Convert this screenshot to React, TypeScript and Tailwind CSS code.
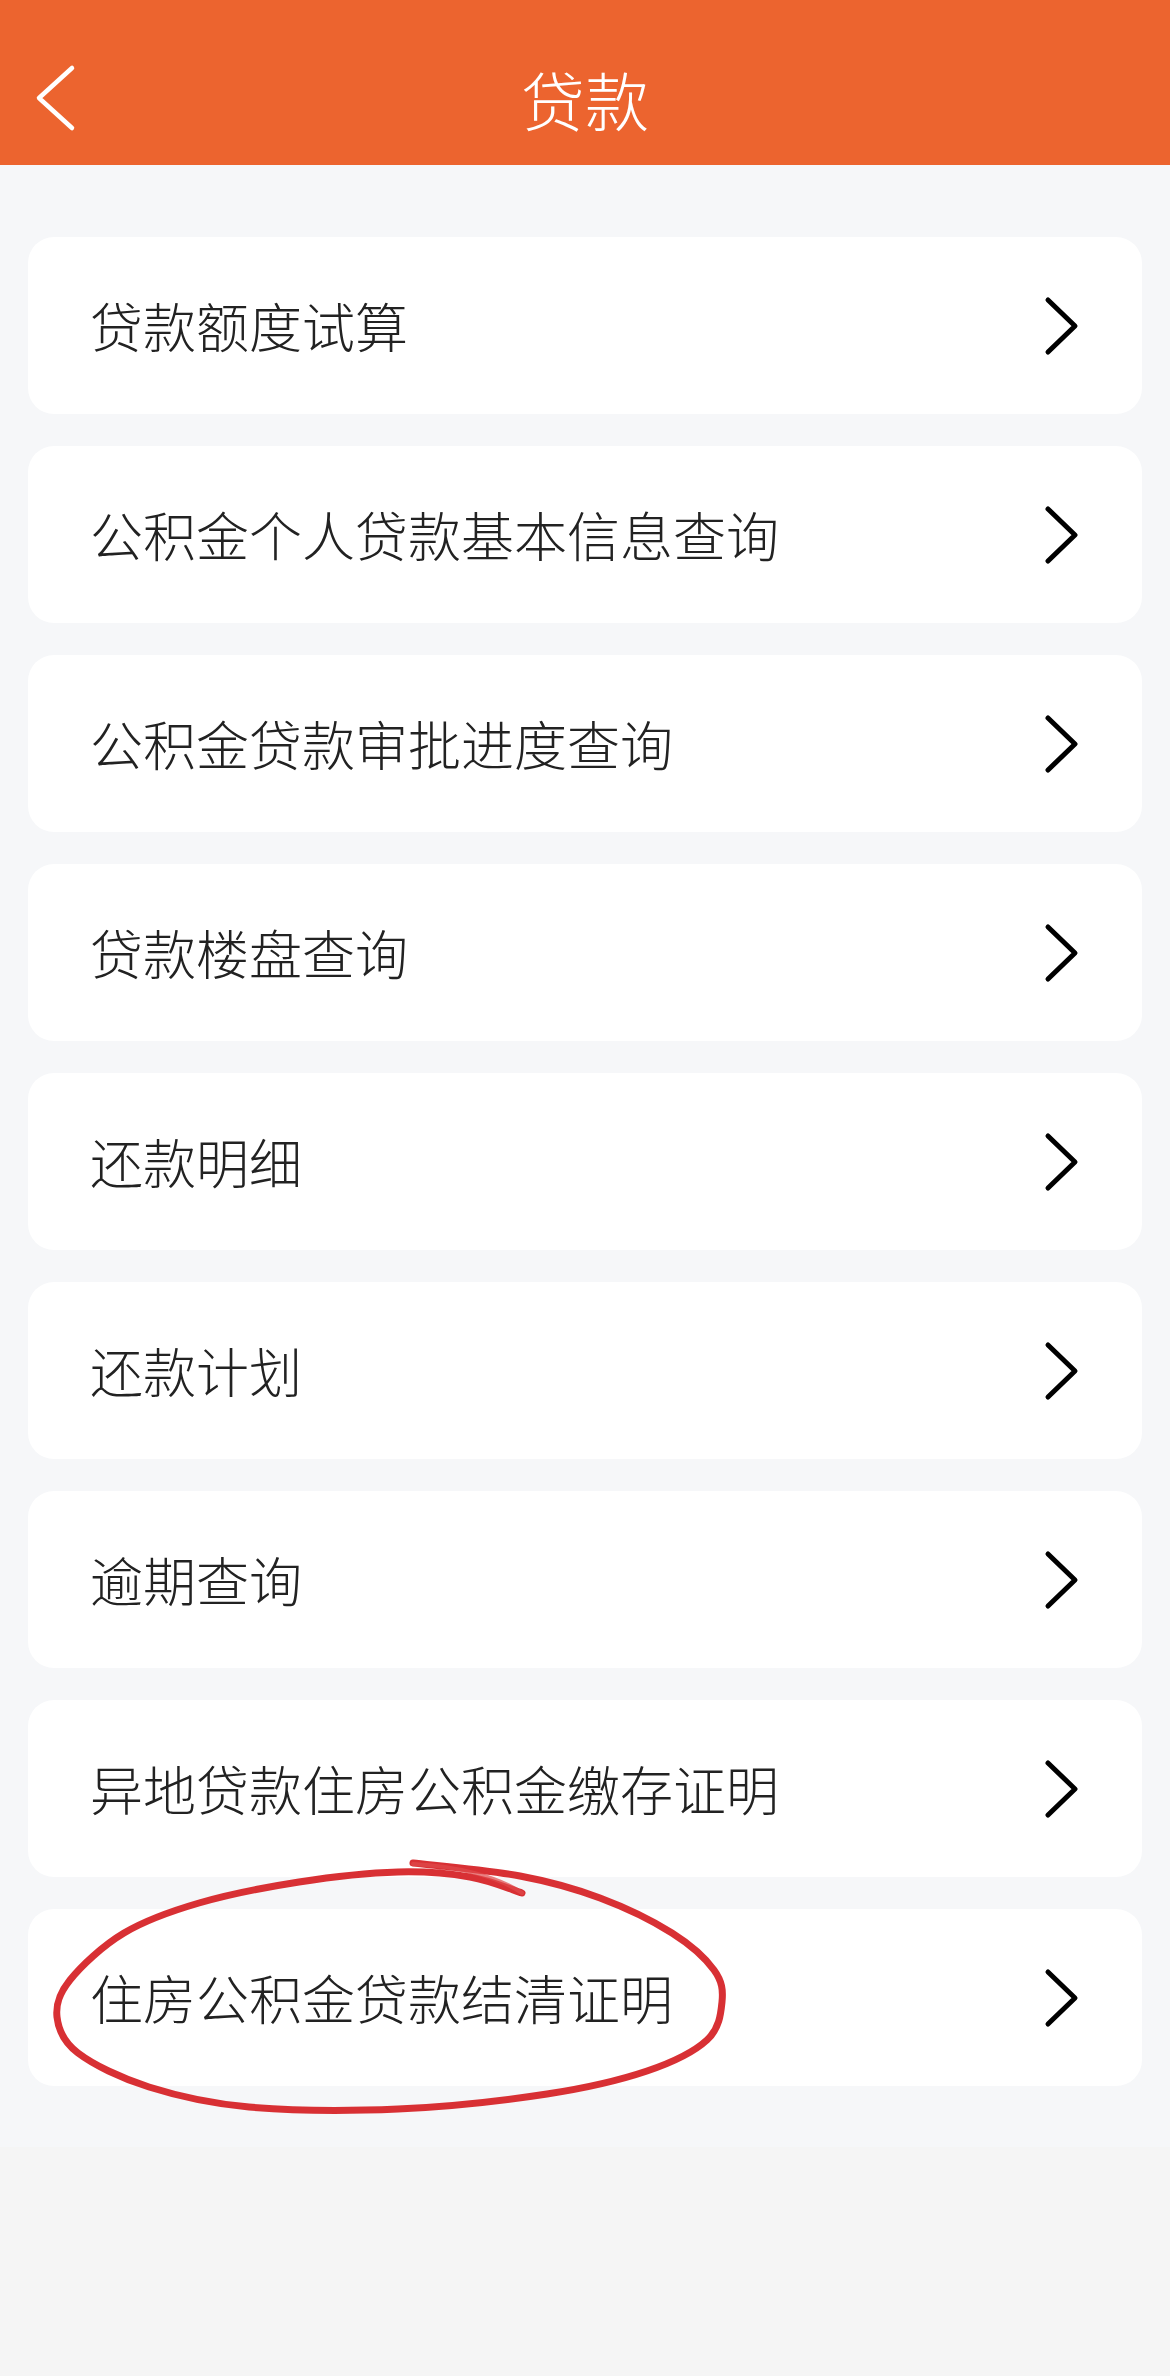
import React from 'react'

const items = [
  '贷款额度试算',
  '公积金个人贷款基本信息查询',
  '公积金贷款审批进度查询',
  '贷款楼盘查询',
  '还款明细',
  '还款计划',
  '逾期查询',
  '异地贷款住房公积金缴存证明',
  '住房公积金贷款结清证明',
]

// hand-drawn red circle around the last row, points in page coords
const loop: [number, number][] = [
  [413, 1863], [520, 1876], [600, 1898], [672, 1933], [714, 1970], [722, 2002],
  [707, 2040], [647, 2071], [547, 2094], [398, 2109], [249, 2107], [149, 2087],
  [78, 2053], [57, 2017], [70, 1980], [124, 1933], [199, 1903], [299, 1882],
  [398, 1872], [470, 1877], [522, 1893],
]

function smooth(pts: [number, number][]) {
  let d = `M${pts[0][0]},${pts[0][1]}`
  for (let i = 0; i < pts.length - 1; i++) {
    const p0 = pts[i - 1] || pts[i]
    const p1 = pts[i]
    const p2 = pts[i + 1]
    const p3 = pts[i + 2] || p2
    const c1x = p1[0] + (p2[0] - p0[0]) / 6
    const c1y = p1[1] + (p2[1] - p0[1]) / 6
    const c2x = p2[0] - (p3[0] - p1[0]) / 6
    const c2y = p2[1] - (p3[1] - p1[1]) / 6
    d += ` C${c1x},${c1y} ${c2x},${c2y} ${p2[0]},${p2[1]}`
  }
  return d
}

function ChevronRight() {
  return (
    <svg width="40" height="64" viewBox="0 0 40 64" className="shrink-0">
      <path d="M6 6 L33 32 L6 58" fill="none" stroke="#000" strokeWidth="5" strokeLinecap="round" strokeLinejoin="round" />
    </svg>
  )
}

export default function App() {
  return (
    <div
      className="relative min-h-[2376px] w-[1170px] bg-[#f5f5f5]"
      style={{ fontFamily: '"Noto Sans CJK SC", "Noto Sans", sans-serif' }}
    >
      <header className="grid h-[165px] grid-cols-[1fr_auto_1fr] items-center bg-[#ec642f] pt-[30px]">
        <div className="pl-[34px]">
          <svg width="48" height="68" viewBox="0 0 48 68">
            <path d="M38 4 L5 34 L38 64" fill="none" stroke="#fff" strokeWidth="4.5" strokeLinecap="round" strokeLinejoin="round" />
          </svg>
        </div>
        <h1 className="text-[64px] font-light leading-none text-white">贷款</h1>
        <div />
      </header>

      <main className="flex flex-col gap-[32px] bg-[#f6f7f9] px-[28px] pb-[61px] pt-[72px]">
        {items.map((label) => (
          <div
            key={label}
            className="flex h-[177px] items-center justify-between rounded-[26px] bg-white pl-[62px] pr-[60px]"
          >
            <span className="text-[53px] font-light leading-none text-[#222]">{label}</span>
            <ChevronRight />
          </div>
        ))}
      </main>

      <svg
        className="pointer-events-none absolute left-0 top-0"
        width="1170"
        height="2376"
        viewBox="0 0 1170 2376"
      >
        <path d={smooth(loop)} fill="none" stroke="#d62529" strokeWidth="7" strokeLinecap="round" strokeLinejoin="round" opacity="0.95" />
        <path d="M413 1864 C460 1866 500 1878 522 1893" fill="none" stroke="#e04a4c" strokeWidth="4" strokeLinecap="round" opacity="0.7" />
      </svg>
    </div>
  )
}
